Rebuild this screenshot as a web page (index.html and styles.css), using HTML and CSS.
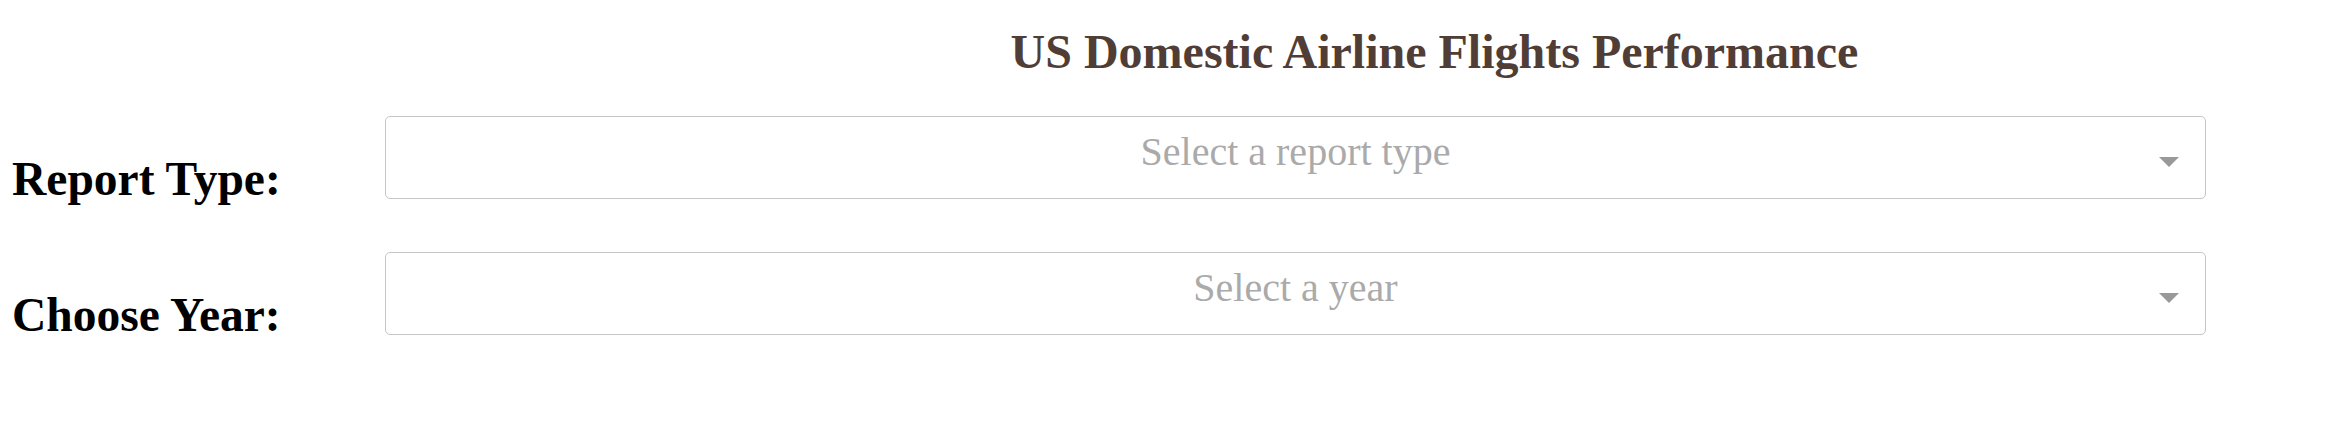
FILE: index.html
```html
<!DOCTYPE html>
<html lang="en">
<head>
<meta charset="utf-8">
<title>US Domestic Airline Flights Performance</title>
<link rel="stylesheet" href="styles.css">
</head>
<body>
  <h1 class="title">US Domestic Airline Flights Performance</h1>
  <div class="form">
    <div class="row">
      <h2 class="label">Report Type:</h2>
      <div class="select">
        <span class="placeholder">Select a report type</span>
        <span class="arrow"></span>
      </div>
    </div>
    <div class="row">
      <h2 class="label">Choose Year:</h2>
      <div class="select">
        <span class="placeholder">Select a year</span>
        <span class="arrow"></span>
      </div>
    </div>
  </div>
</body>
</html>
```

FILE: styles.css
```css
html, body {
  background: #ffffff;
}

body {
  margin: 8px;
  font-family: "Liberation Serif", "Times New Roman", serif;
}

.title {
  margin: 16px 0 0 0;
  padding-left: 529px;
  text-align: center;
  font-size: 48px;
  line-height: 56px;
  font-weight: bold;
  color: #503D36;
}

.form {
  display: flex;
  flex-direction: column;
  gap: 48px;
  margin-top: 36px;
}

.row {
  display: flex;
  align-items: flex-start;
}

.label {
  width: 373px;
  margin: 38px 0 0 0;
  padding-left: 4px;
  font-size: 47.5px;
  line-height: 50px;
  font-weight: bold;
  color: #000000;
  white-space: nowrap;
}

.select {
  box-sizing: border-box;
  width: 1821px;
  height: 83px;
  border: 1px solid #c6c6c6;
  border-radius: 5px;
  display: grid;
  grid-template-columns: 1fr;
  padding-top: 13px;
}

.placeholder {
  grid-area: 1 / 1;
  text-align: center;
  font-size: 40px;
  line-height: 44px;
  color: #aaaaaa;
}

.arrow {
  grid-area: 1 / 1;
  justify-self: end;
  align-self: start;
  margin-top: 27px;
  margin-right: 26px;
  width: 0;
  height: 0;
  border-left: 10px solid transparent;
  border-right: 10px solid transparent;
  border-top: 10px solid #999999;
}
```
